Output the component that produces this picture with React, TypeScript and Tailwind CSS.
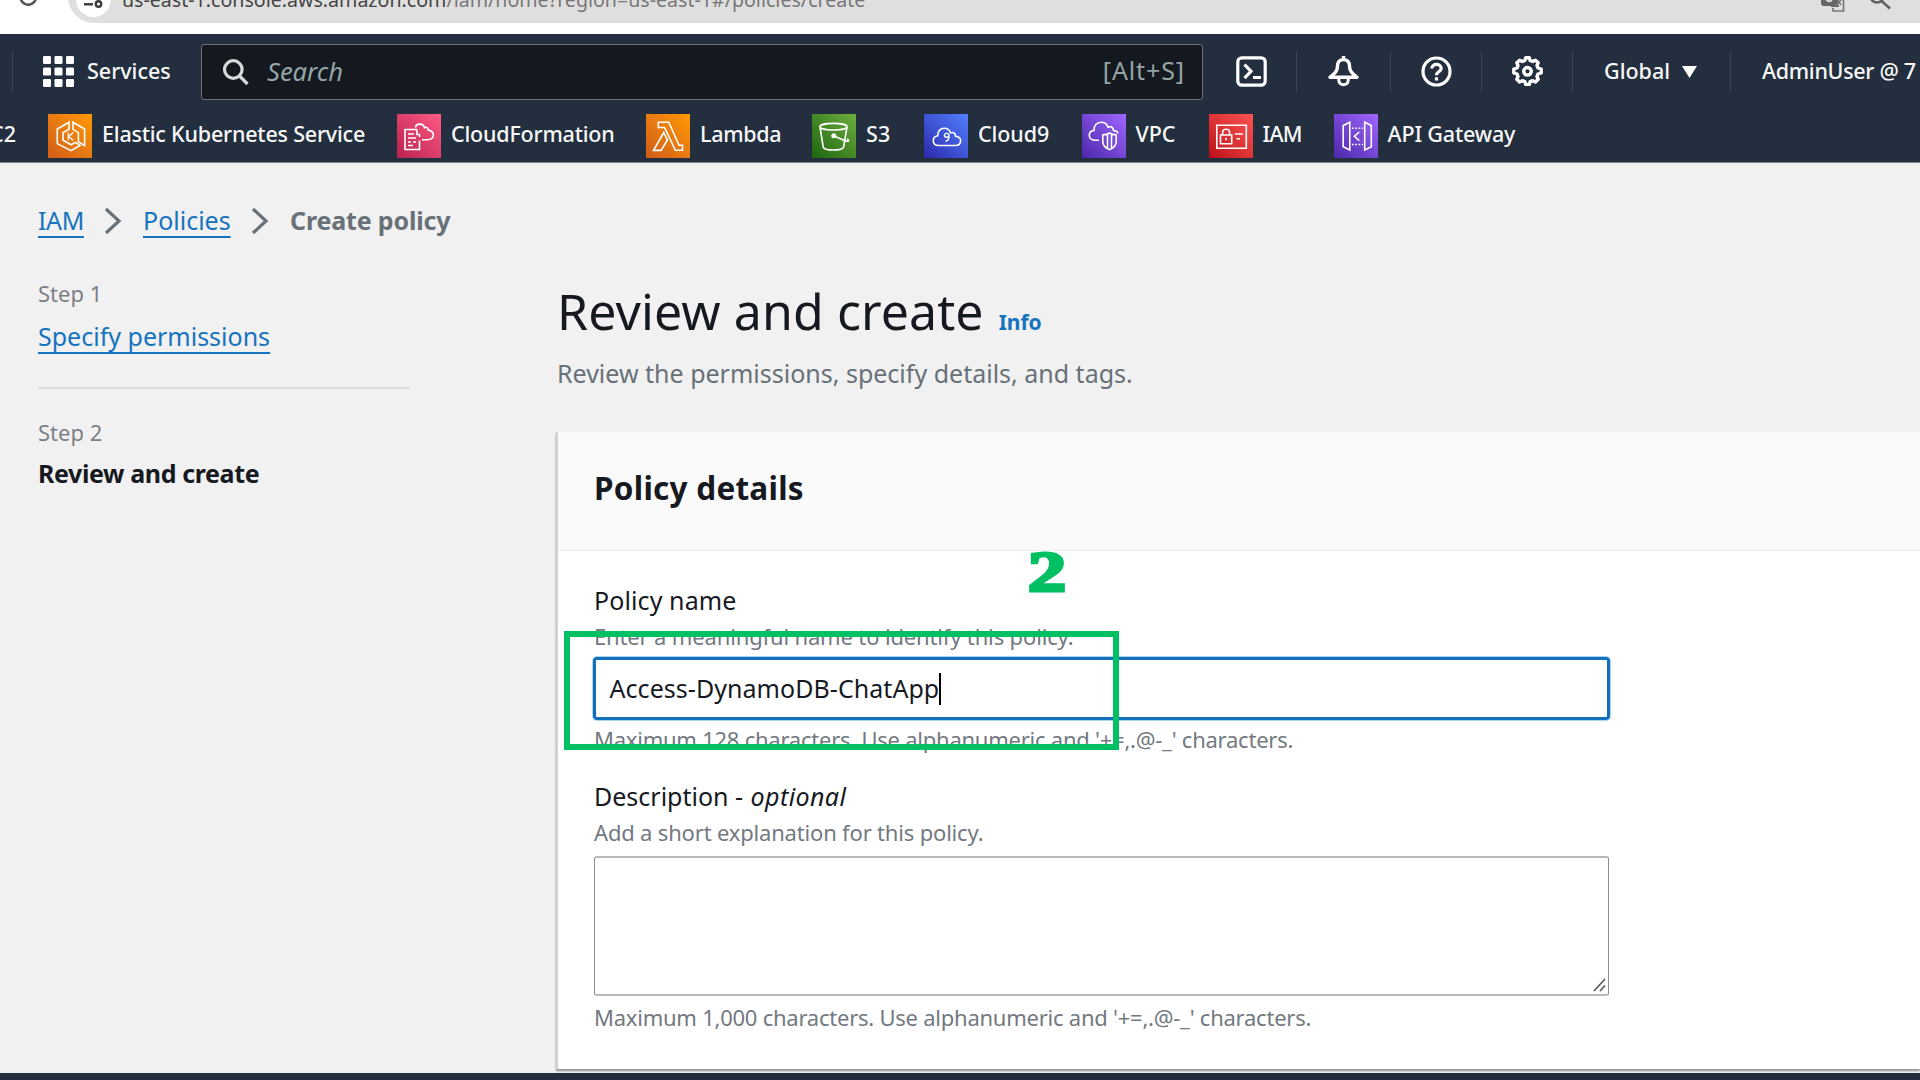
import type { ReactNode } from 'react';

type Service = {
  label: string;
  width: string;
  tracking: string;
  tile: string;
  icon: ReactNode;
};

const services: Service[] = [
  {
    label: 'Elastic Kubernetes Service',
    width: 'w-[349px]',
    tracking: 'tracking-[-0.2px]',
    tile: 'from-[#d05c17] to-[#ff9900]',
    icon: (
      <>
        <path d="M21 8.2 9.3 15v14.6L23 36.6l9-5.2-4.6-3-4.400 2.400-8-4.600v-7.600l6-3.400zM25 8.200 36.600 15v16.600l-6.200-3.800v-9.200L25 15.400z" />
        <path d="M20.300 18.500v8M25.300 18.500l-4.600 4 4.600 4" strokeWidth="1.300" />
      </>
    ),
  },
  {
    label: 'CloudFormation',
    width: 'w-[249px]',
    tracking: 'tracking-[-0.2px]',
    tile: 'from-[#b8204f] to-[#ff5a85]',
    icon: (
      <>
        <path d="M20 15.500H8v20h14.500v-9M20 15.500v5M11 20h6M11 24h8M11 28h3M16 28h3M11 31.500h5" />
        <path d="M18.500 13.500c.5-4 7.500-5 9 .2 2-1.200 3.700.2 3.700 2.400 3.600.5 5.300 2.600 5.100 5.200-.2 2.900-2.600 4.500-6 4.400H25M19 20.500h3.500v2.500" />
      </>
    ),
  },
  {
    label: 'Lambda',
    width: 'w-[166px]',
    tracking: 'tracking-[-0.3px]',
    tile: 'from-[#d05c17] to-[#ff9900]',
    icon: (
      <path d="M12.300 8.300h10.500l10.200 23h3.500v5h-7.200L19.300 15l-1-1.500h-6zM17.800 18.500 7.500 36.400h7.600l6.300-10.500z" />
    ),
  },
  {
    label: 'S3',
    width: 'w-[112px]',
    tracking: 'tracking-[0.2px]',
    tile: 'from-[#1b660f] to-[#6cae3e]',
    icon: (
      <>
        <ellipse cx="21.500" cy="12.700" rx="13.500" ry="3.300" />
        <path d="m8 13 3.300 20.500c2.500 3.400 17.500 3.400 20.200 0L35 13M22 22l11.500 5c3 .9 4.500-.4 1.500-2" />
        <circle cx="21.800" cy="21.800" r="1.700" fill="currentColor" />
      </>
    ),
  },
  {
    label: 'Cloud9',
    width: 'w-[157.5px]',
    tracking: 'tracking-[-0.1px]',
    tile: 'from-[#2e27ad] to-[#527fff]',
    icon: (
      <>
        <path d="M15 31.500c-3.600 0-5.700-2-5.700-4.800 0-2.600 1.700-4.500 4.400-4.900-.3-4.400 2.600-7.500 6.500-7.500 3.300 0 5.400 1.800 6.400 4.600 2.700-1.300 4.800.4 5 3.300 3.100.4 5 2.100 5 4.600 0 2.900-2 4.700-5.300 4.700z" />
        <path d="M25 21.300c0 2.600-4.600 2.600-4.600 0s4.600-2.600 4.600 0c.3 3-.6 5.500-3.600 6" strokeWidth="1.300" />
      </>
    ),
  },
  {
    label: 'VPC',
    width: 'w-[127px]',
    tracking: 'tracking-normal',
    tile: 'from-[#4d27aa] to-[#a166ff]',
    icon: (
      <>
        <path d="M17 26.300h-3.500c-3.700 0-6.200-2-6.200-4.900 0-2.600 1.700-4.600 4.700-5-.4-4.700 3-8.100 7-8.100 3.700 0 6 1.900 7 4.900 3.200-1.600 5.300.5 5.400 3.200 2.600.3 4.200 1.400 4.600 3" />
        <path d="M27.500 19c2 1.500 4.300 1.800 6.700 1.800v6.800c0 3.800-2.500 6.500-6.700 8-4.200-1.500-6.700-4.200-6.700-8v-6.800c2.400 0 4.700-.3 6.700-1.800zM25.500 20.500v14M29.500 20.500v14" />
      </>
    ),
  },
  {
    label: 'IAM',
    width: 'w-[125px]',
    tracking: 'tracking-[-0.7px]',
    tile: 'from-[#bd0816] to-[#ff5252]',
    icon: (
      <path d="M7.800 11.300h29.500v23H7.800zM11.500 21h11.200v8.700H11.500zM13.600 21v-2.600c0-4.300 7-4.300 7 0V21M17.100 23.800v2.500M25.800 20H34M27.500 24.700h3.500" />
    ),
  },
  {
    label: 'API Gateway',
    width: 'w-[260px]',
    tracking: 'tracking-[-0.15px]',
    tile: 'from-[#4d27aa] to-[#a166ff]',
    icon: (
      <>
        <path d="m15.800 8.300-6.600 3.200v21.300l6.600 3.200zM30.700 8.300l6.600 3.200v21.300l-6.600 3.200zM25.300 18l-5 4.300 5 4.300" />
        <path d="M18 14.200h11M18 30.500h11" strokeDasharray="1.700 1.600" />
      </>
    ),
  },
];

function Divider() {
  return <div className="h-[41px] w-px shrink-0 bg-[#3a4655]" />;
}

function BrowserBar() {
  return (
    <div className="relative h-[34px] overflow-hidden bg-white font-['Noto_Sans']">
      <svg className="absolute top-[-20px] left-[17px]" width="28" height="28" viewBox="0 0 28 28" fill="none" stroke="#555" strokeWidth="2.600">
        <path d="M3 16a8.300 10 0 0 0 16.500 0" />
      </svg>
      <div className="absolute top-[-30px] left-[68px] h-[53px] w-[1900px] rounded-l-full bg-[#dfdfdf]">
        <div className="absolute top-[11px] left-[8px] h-[36px] w-[35px] rounded-full bg-white" />
        <svg className="absolute top-[23px] left-[14px]" width="22" height="16" viewBox="0 0 22 16" fill="none" stroke="#3c3c3c" strokeWidth="2.400">
          <path d="M2 11.300h9" />
          <circle cx="16.500" cy="11" r="2.700" />
        </svg>
        <div className="absolute top-[15px] left-[54px] text-[19.600px] leading-[30px] whitespace-nowrap text-[#777]">
          <span className="text-[#444]">us-east-1.console.aws.amazon.com</span>/iam/home?region=us-east-1#/policies/create
        </div>
        <svg className="absolute top-[22px] left-[1752px]" width="26" height="22" viewBox="0 0 26 22">
          <path d="M1 0h15l3 15h-8v-1H4c-2 0-3-1-3-3z" fill="#666" />
          <path d="M6 7c2 3 5 3 6 0" stroke="#ddd" strokeWidth="2" fill="none" />
          <path d="M15 4h8.500v15H13v-3" stroke="#777" strokeWidth="1.700" fill="none" />
          <path d="m15 14 6-6m-4-1 4 6" stroke="#777" strokeWidth="1.500" />
        </svg>
        <svg className="absolute top-[14px] left-[1800px]" width="26" height="27" viewBox="0 0 26 27" fill="none" stroke="#5f5f5f" strokeWidth="2.600">
          <circle cx="9" cy="12" r="6.500" />
          <path d="m13.500 17 8.500 7.500" />
        </svg>
      </div>
    </div>
  );
}

function TopNav() {
  return (
    <div className="flex h-[75px] items-center pl-3 text-[21.5px] font-medium text-[#f8f8f8]">
      <Divider />
      <svg className="ml-[30px] shrink-0" width="31" height="31" viewBox="0 0 31 31" fill="#fff">
        {[0, 11.500, 23].map((y) =>
          [0, 11.500, 23].map((x) => <rect key={`${x}-${y}`} x={x} y={y} width="8" height="8" rx="1.300" />),
        )}
      </svg>
      <span className="ml-[13px] w-[114px] pb-[1px] tracking-[0px]">Services</span>
      <div className="flex h-[56px] w-[1002px] shrink-0 items-center rounded-[3px] border-[1.500px] border-[#687078] bg-[#14181f] text-[25px] font-normal text-[#95a5a6]">
        <svg className="ml-[20px] shrink-0" width="28" height="28" viewBox="0 0 28 28" fill="none" stroke="#d5dbdb" strokeWidth="3.200">
          <circle cx="11.300" cy="11.500" r="8.800" />
          <path d="m17.500 18 8 8" />
        </svg>
        <span className="ml-[17px] text-[25.5px] italic">Search</span>
        <span className="mr-[17px] ml-auto pb-[1px] tracking-[0.9px]">[Alt+S]</span>
      </div>
      <svg className="ml-[33px] shrink-0" width="31" height="31" viewBox="0 0 31 31" fill="none" stroke="#fff" strokeWidth="3.200">
        <rect x="1.800" y="1.800" width="27.400" height="27.400" rx="4" />
        <path d="m8.500 8.500 6.500 6.800-6.500 6.800M17 21.500h8" />
      </svg>
      <div className="ml-[29px]"><Divider /></div>
      <svg className="ml-[31px] shrink-0" width="31" height="31" viewBox="0 0 31 31" fill="none" stroke="#fff" strokeWidth="3.400" strokeLinejoin="round">
        <path d="M15.500 0v4M15.500 3.500c-4 0-6 3-6 6.500 0 5-2.500 7.500-7.500 11.300h27c-5-3.800-7.500-6.300-7.500-11.300 0-3.500-2-6.500-6-6.500z" />
        <path d="M10.800 22v2.200c0 6 9.400 6 9.400 0V22" strokeWidth="3" />
      </svg>
      <div className="ml-[31px]"><Divider /></div>
      <svg className="ml-[30px] shrink-0" width="31" height="31" viewBox="0 0 31 31" fill="none" stroke="#fff" strokeWidth="3.200">
        <circle cx="15.500" cy="15.500" r="13.500" />
        <path d="M10.800 12.500c0-5.500 9.400-5.500 9.400 0 0 3-4.700 3.200-4.700 6.700M15.500 21.200v3.200" />
      </svg>
      <div className="ml-[29px]"><Divider /></div>
      <svg className="ml-[30px] shrink-0" width="31" height="31" viewBox="0 0 31 31" fill="none" stroke="#fff" strokeWidth="3.400" strokeLinejoin="round">
        <path d="M12.900 4.500 13.700 1.800h3.600l.8 2.700 2.600 1 2.700-1.300 2.800 2.500-1.200 2.800 1 2.500 3.200 1v4l-3.200 1-1 2.500 1.200 2.800-2.800 2.700-2.700-1.300-2.600 1-.8 2.700h-3.600l-.8-2.700-2.600-1-2.700 1.300-2.800-2.700L6 20.500 5 18l-3.200-1v-4L5 12l1-2.500-1.200-2.800 2.800-2.500 2.700 1.300z" />
        <circle cx="15.500" cy="15.300" r="3.800" />
      </svg>
      <div className="ml-[29px]"><Divider /></div>
      <span className="ml-[31px] w-[78px]">Global</span>
      <svg className="shrink-0" width="15" height="12" viewBox="0 0 15 12" fill="#fff"><path d="M0 0h15L7.500 12z" /></svg>
      <div className="ml-[33px]"><Divider /></div>
      <span className="ml-[31px] tracking-[-0.300px] whitespace-nowrap">AdminUser @ 7</span>
    </div>
  );
}

function FavoritesBar() {
  return (
    <div className="flex h-[54px] items-center text-[21.5px] font-medium text-[#f8f8f8]">
      <span className="flex w-[48px] justify-end pr-[32px] pb-[3px]">EC2</span>
      {services.map((s) => (
        <div key={s.label} className={`flex shrink-0 items-center gap-[10px] ${s.width}`}>
          <div className={`size-[44px] shrink-0 bg-linear-to-tr ${s.tile}`}>
            <svg className="text-white" width="44" height="44" viewBox="0 0 44 44" fill="none" stroke="currentColor" strokeWidth="1.600">
              {s.icon}
            </svg>
          </div>
          <span className={`pb-[3px] whitespace-nowrap ${s.tracking}`}>{s.label}</span>
        </div>
      ))}
    </div>
  );
}

const link = 'text-[#1673bd] underline decoration-2 underline-offset-[6px] [text-decoration-skip-ink:none]';

function Chevron() {
  return (
    <svg width="18" height="28" viewBox="0 0 18 28" fill="none" stroke="#687078" strokeWidth="3.200">
      <path d="m2 2 13 12L2 26" />
    </svg>
  );
}

function Steps() {
  return (
    <aside className="w-[372px] shrink-0">
      <div className="text-[22px] leading-[42px] text-[#7b8087]">Step 1</div>
      <div className="pt-px text-[25px] leading-[42px]"><a className={link}>Specify permissions</a></div>
      <div className="mt-[30px] h-[1.500px] bg-[#dcdcdc]" />
      <div className="mt-[22px] text-[22px] leading-[42px] text-[#7b8087]">Step 2</div>
      <div className="text-[25px] leading-[41px] font-bold tracking-[-0.38px] text-[#16191f]">Review and create</div>
    </aside>
  );
}

function PolicyDetails() {
  return (
    <section className="mt-[41px] h-[637px] border-l-2 border-[#cfd1d2] bg-white shadow-[0_2px_2px_#8b9196]">
      <h2 className="flex h-[119px] items-center border-b-[1.500px] border-[#eaeded] bg-[#fafafa] pb-[7px] pl-9 text-[31.5px] font-bold tracking-[0.25px] text-[#16191f]">
        Policy details
      </h2>
      <div className="pt-[29px] pl-9 text-[22px] tracking-[-0.24px] text-[#727981]">
        <div className="text-[25px] leading-[40px] tracking-[0.1px] text-[#16191f]">Policy name</div>
        <div className="leading-[33px] tracking-[-0.15px]">Enter a meaningful name to identify this policy.</div>
        <div className="relative mt-[4px] -ml-[1.5px] h-[63px] w-[1017px]">
          <div className="flex h-full items-center rounded-[4px] border-[3px] border-[#1470bd] pl-[14px] text-[25px] tracking-[0.05px] text-[#16191f] shadow-[0_0_0_1px_#a9d6ef]">
            Access-DynamoDB-ChatApp
            <span className="h-[32px] w-[2px] bg-black" />
          </div>
          <div className="absolute top-[-26px] left-[-29px] h-[119px] w-[555px] border-[6px] border-[#00c063]" />
          <div className="absolute top-[-125px] left-[435px] origin-left scale-x-[1.36] font-['Liberation_Serif'] text-[56px] leading-[80px] font-bold tracking-normal text-[#00c063] [-webkit-text-stroke:3px_#00c063]">
            2
          </div>
        </div>
        <div className="mt-1 leading-[30px]">Maximum 128 characters. Use alphanumeric and '+=,.@-_' characters.</div>
        <div className="mt-6 text-[25px] leading-[36px] tracking-normal text-[#16191f]">
          Description - <em className="ml-px tracking-[0.4px]">optional</em>
        </div>
        <div className="mt-[2px] leading-[33px] tracking-[-0.18px]">Add a short explanation for this policy.</div>
        <div className="mt-[7px] -ml-[0.5px] flex h-[140px] w-[1015px] items-end justify-end rounded-[3px] border-x-[1.500px] border-y-2 border-x-[#8d8d8d] border-y-[#b9b9b9] p-[2px]">
          <svg width="13" height="14" viewBox="0 0 13 14" stroke="#555" strokeWidth="1.600">
            <path d="M1 13 12 1M7 13l5-5.500" />
          </svg>
        </div>
        <div className="mt-[6px] leading-[30px]">Maximum 1,000 characters. Use alphanumeric and '+=,.@-_' characters.</div>
      </div>
    </section>
  );
}

export default function App() {
  return (
    <div className="flex h-[1080px] w-[1920px] flex-col overflow-hidden bg-[#f1f1f1] font-['Noto_Sans',sans-serif]">
      <BrowserBar />
      <header className="h-[129px] shrink-0 border-b border-[#7a828b] bg-[#232f3e]">
        <TopNav />
        <FavoritesBar />
      </header>
      <div className="h-[910px] shrink-0 pt-[38px]">
        <nav className="flex h-10 items-center pl-[38px] text-[25px]">
          <a className={`${link} w-[66px]`}><span className="tracking-[-0.4px]">IAM</span></a>
          <Chevron />
          <a className={`${link} ml-[21px] w-[108px]`}>Policies</a>
          <Chevron />
          <span className="ml-[21px] font-bold tracking-[-0.15px] text-[#687078]">Create policy</span>
        </nav>
        <div className="flex pt-[31px] pl-[38px]">
          <Steps />
          <main className="ml-[146px] flex-1 pt-[9px]">
            <div className="flex h-[60px] items-baseline pl-px leading-[60px]">
              <h1 className="text-[50px] tracking-[0.1px] text-[#16191f]">Review and create</h1>
              <a className="ml-[15px] text-[21px] font-bold text-[#1673bd]">Info</a>
            </div>
            <p className="mt-[14px] pl-px text-[25px] leading-[36px] text-[#687078]">
              Review the permissions, specify details, and tags.
            </p>
            <PolicyDetails />
          </main>
        </div>
      </div>
      <footer className="h-[7px] shrink-0 bg-[#232f3e]" />
    </div>
  );
}
